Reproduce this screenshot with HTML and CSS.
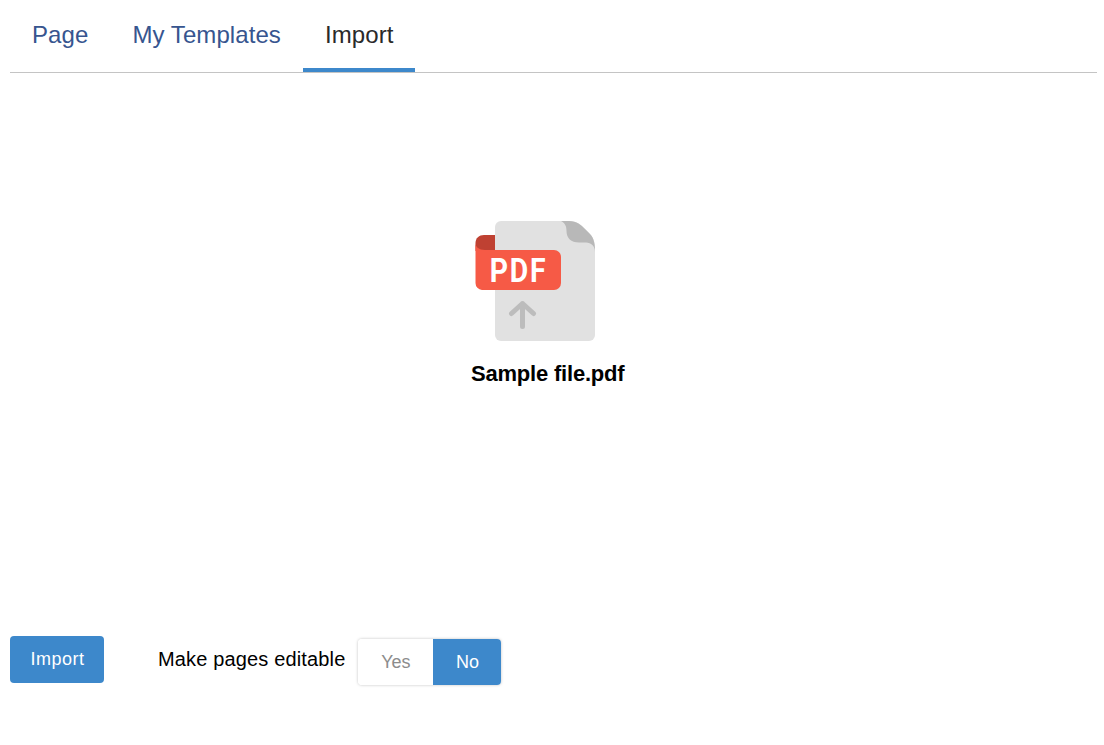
FILE: index.html
```html
<!DOCTYPE html>
<html lang="en">
<head>
<meta charset="utf-8">
<title>Import</title>
<link rel="stylesheet" href="styles.css">
</head>
<body>
<div class="page">
  <nav class="tabs">
    <a class="tab">Page</a>
    <a class="tab">My Templates</a>
    <a class="tab active">Import</a>
  </nav>
  <main class="preview">
    <div class="file">
      <svg class="file-icon" width="120" height="120" viewBox="0 0 120 120" aria-hidden="true">
        <path d="M26 0H94C102 0 106 4 110 8L114 12C118 16 120 20 120 28V114a6 6 0 0 1-6 6H26a6 6 0 0 1-6-6V6a6 6 0 0 1 6-6Z" fill="#e1e1e1"/>
        <path d="M86 0H94C102 0 106 4 110 8L114 12C118 16 120 20 120 31C120 25 116 21.500 111 21.500H104C96 21.500 91.500 17 91.500 10C91.500 5 90 2 86 0Z" fill="#b8b8b8"/>
        <path d="M20 14H9C4 14 .5 17 .5 22V30H20Z" fill="#bf4132"/>
        <path d="M.5 22C.5 26 4 29 10 29H79a7 7 0 0 1 7 7V62a7 7 0 0 1-7 7H7a7 7 0 0 1-6.500-7Z" fill="#f65a46"/>
        <text class="pdf-label" transform="translate(43.500 60.500) scale(.86 1)" text-anchor="middle">PDF</text>
        <path d="M47.500 105.500V82.500M36.500 92.500L47.500 82.500L58.500 92.500" fill="none" stroke="#bcbcbc" stroke-width="5" stroke-linecap="round" stroke-linejoin="round"/>
      </svg>
      <div class="file-name">Sample file.pdf</div>
    </div>
  </main>
  <footer class="actions">
    <button class="import-btn" type="button">Import</button>
    <span class="editable-label">Make pages editable</span>
    <div class="toggle">
      <span class="opt">Yes</span>
      <span class="opt on">No</span>
    </div>
  </footer>
</div>
</body>
</html>
```
FILE: styles.css
```css
* { box-sizing: border-box; }
html, body { margin: 0; padding: 0; background: #fff; }
body { font-family: "Liberation Sans", Arial, sans-serif; height: 745px; overflow: hidden; }
.page { padding: 0 7px 0 10px; }
.tabs { display: flex; height: 73px; border-bottom: 1px solid #c4c4c4; }
.tab {
  height: 72px;
  padding: 21px 22px 0;
  font-size: 24px;
  line-height: 28px;
  letter-spacing: .08px;
  color: #37558f;
}
.tab.active { color: #2a2a2a; border-bottom: 4px solid #3d88cb; }
.preview { height: 563px; padding: 148px 0 0 461px; }
.file { display: flex; flex-direction: column; align-items: flex-start; }
.file-icon { display: block; margin-left: 4px; }
.pdf-label { font-family: Roboto, "Liberation Sans", sans-serif; font-weight: 700; font-size: 33px; letter-spacing: 2px; fill: #fff; }
.file-name { margin-top: 20px; font-size: 22px; line-height: 26px; font-weight: 700; letter-spacing: -.2px; color: #000; }
.actions { display: flex; align-items: flex-start; }
.import-btn {
  width: 94px; height: 47px; padding: 0 0 2px 1px; border: 0; border-radius: 4px;
  background: #3d88cb; color: #fff;
  font: 18px/22px "Liberation Sans", Arial, sans-serif;
  letter-spacing: .5px;
}
.editable-label { margin: 11px 12px 0 54px; font-size: 20px; line-height: 24px; letter-spacing: .15px; color: #000; }
.toggle {
  display: flex; margin: 3px 0 0 1px; height: 46px; border-radius: 4px; overflow: hidden;
  box-shadow: 0 0 3px rgba(0,0,0,.25);
}
.opt { display: flex; align-items: center; justify-content: center; width: 75px; font-size: 18px; color: #8c8c8c; background: #fff; }
.opt.on { width: 68px; color: #fff; background: #3d88cb; }
```
